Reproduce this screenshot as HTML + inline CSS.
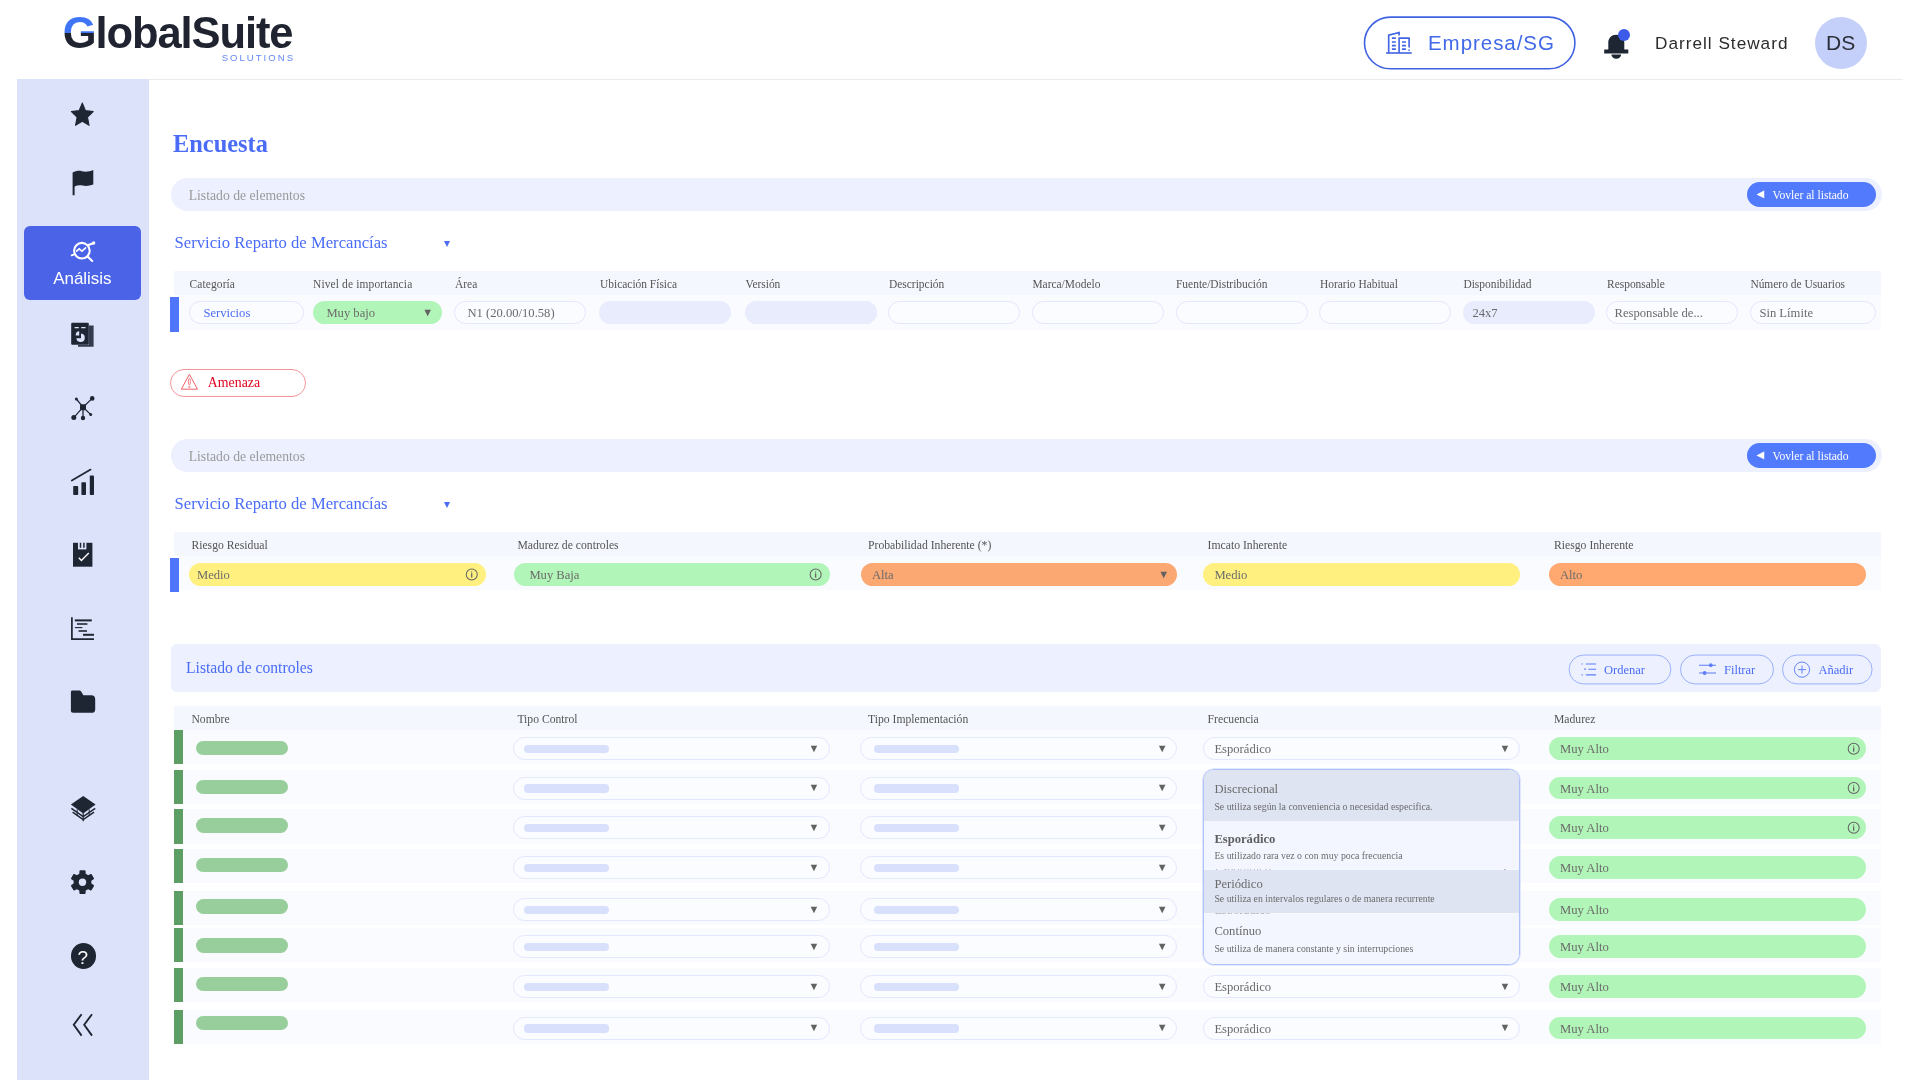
<!DOCTYPE html>
<html lang="es"><head><meta charset="utf-8"><title>Encuesta - GlobalSuite</title>
<style>
html,body{margin:0;padding:0;background:#fff;}
body{width:1920px;height:1080px;position:relative;overflow:hidden;font-family:"Liberation Serif",serif;color:#666;}
div{position:absolute;box-sizing:border-box;}
svg{position:absolute;overflow:visible;}
.t{white-space:nowrap;line-height:1;}
.sans{font-family:"Liberation Sans",sans-serif;}
.lbl{font-size:11.4px;color:#555;}
.pt{font-size:12.5px;color:#6a6a6a;}
.pill{border-radius:12px;}
.inp{border:1px solid #e1e7fd;background:#fbfcff;border-radius:12px;}
.fill{background:#e8ecfd;border-radius:12px;}
.hdr{background:#f5f7fe;}
.row{background:#fafbff;}
.green{background:#b2f5b8;}
.yellow{background:#fff080;}
.arrow{width:0;height:0;border-left:3.6px solid transparent;border-right:3.6px solid transparent;border-top:6px solid #555;}
.gbar{background:#5c9e63;}
.gpill{background:#98ce9b;border-radius:8px;}
.ph{background:#d8e0fc;border-radius:4px;}
</style></head><body>
<div id="app" style="left:0;top:0;width:1920px;height:1080px;will-change:transform;">

<div style="left:17px;top:79px;width:1886px;height:1px;background:#e9ebef;"></div>
<div class="t sans" style="left:62.8px;top:11.1px;font-size:43.5px;font-weight:bold;letter-spacing:-1.1px;color:#1f2430;line-height:44px;" id="logo"><span style="background:linear-gradient(#3f74f7 0,#3f74f7 49.5%,#1f2430 49.5%);-webkit-background-clip:text;background-clip:text;color:transparent;">G</span>lobalSuite</div>
<div class="t sans" id="sol" style="left:221.7px;top:52px;font-size:9.5px;letter-spacing:2.05px;color:#6388f6;line-height:11px;">SOLUTIONS</div>
<svg style="left:1362px;top:14px" width="216" height="58" viewBox="0 0 216 58"><rect x="2.5" y="3.1" width="210.4" height="51.7" rx="25.85" fill="none" stroke="#3f63e3" stroke-width="1.6"/></svg>
<svg style="left:1386px;top:31px" width="27" height="24" viewBox="0 0 27 24" fill="none" stroke="#3f63e3" stroke-width="1.6">
<path d="M0.1 22H25.7"/><path d="M2.7 22V4.2L13.1 1.5V4.6"/><path d="M13.1 22V7.1H23.1V16.6"/><path d="M22.2 19.1H23.9" stroke-width="1.3"/>
<path d="M5.9 7.1H9.8M5.9 11H9.8M5.9 14.6H9.8M5.9 18.2H9.8M16 11H19.9M16 14.6H19.9M16 18.2H19.9" stroke-width="1.7"/>
</svg>
<div class="t sans" id="emp" style="left:1428px;top:30px;font-size:20.5px;letter-spacing:0.95px;color:#4169e8;line-height:25px;">Empresa/SG</div>
<svg style="left:1604px;top:34px" width="25" height="26" viewBox="0 0 25 26">
<path d="M12.3 0.7c-4.8 0-8 3.4-8 7.8v6.9H0.2v4.1h24.1v-4.1h-4V8.5c0-4.4-3.2-7.8-8-7.8z" fill="#1f2633"/>
<path d="M7.4 20.6h9.8a4.9 4.1 0 0 1-9.8 0z" fill="#1f2633"/></svg>
<div style="left:1618px;top:29px;width:12px;height:12px;background:#3b5be8;border-radius:50%;"></div>
<div class="t sans" id="usr" style="left:1655px;top:32px;font-size:17.2px;letter-spacing:1.0px;color:#2b2b2b;line-height:22px;">Darrell Steward</div>
<div style="left:1815px;top:17px;width:52px;height:52px;background:#c5d0fa;border-radius:50%;"></div>
<div class="t sans" id="ds" style="left:1826px;top:30px;font-size:21px;color:#2b2f38;line-height:26px;">DS</div>
<div style="left:17px;top:79px;width:132px;height:1001px;background:#dde2fb;"></div>
<div style="left:24px;top:226px;width:117px;height:74px;background:#4a63e7;border-radius:6px;"></div>
<div class="t sans" style="left:53.2px;top:269px;font-size:17px;line-height:19px;color:#fff;letter-spacing:-0.05px;">Análisis</div>
<svg style="left:70px;top:102px" width="26" height="26" viewBox="0 0 26 26" ><g transform="translate(12.3,13.4) scale(1,1.07)"><polygon points="0.00,-11.50 3.23,-4.45 10.94,-3.55 5.23,1.70 6.76,9.30 0.00,5.50 -6.76,9.30 -5.23,1.70 -10.94,-3.55 -3.23,-4.45" fill="#1f2633" stroke="#1f2633" stroke-width="1" stroke-linejoin="round"/></g></svg>
<svg style="left:70px;top:168px" width="26" height="30" viewBox="0 0 26 30" ><path d="M2.6 4.6 C6 2.8 9 2.4 12 3.2 C16 4.2 19.5 3.4 23.3 2 V16.6 C19.5 18 16 18.4 12.5 17.6 C9.5 17 7 17.4 4.6 18.6 V27.2 H2.6 Z" fill="#1f2633"/></svg>
<svg style="left:69px;top:239px" width="28" height="26" viewBox="0 0 28 26" ><g fill="none" stroke="#fff" stroke-width="2.1" stroke-linecap="round">
<circle cx="12.9" cy="11.7" r="7.8"/><path d="M18.6 17.4L23.2 22"/><path d="M18.6 6.2L24.4 4.2"/><path d="M5.2 15.4L2.6 16.4" stroke-width="1.8"/>
<path d="M7.6 12.2l2.6-2.4 2.8 2.4 3.6-3.4" stroke-width="1.6"/></g><circle cx="24.6" cy="4" r="1.7" fill="#fff"/></svg>
<svg style="left:70px;top:321px" width="26" height="28" viewBox="0 0 26 28" ><rect x="1.2" y="1.8" width="17.6" height="22" rx="1" fill="#1f2633"/>
<path d="M18.8 4.6H23.6V25.8H8V23.8H18.8Z" fill="#343b4c"/>
<path d="M4.6 6.6H8.8M11.2 6.6H15.6" stroke="#dde2fb" stroke-width="1.4"/>
<path d="M9.2 10.2v4.4h-3.4a3.6 3.6 0 0 1 3.4-4.4z" fill="#dde2fb"/>
<path d="M11 12.6a4.2 4.2 0 1 1-4.6 4.6h4.6z" fill="#dde2fb"/></svg>
<svg style="left:69px;top:393px" width="28" height="30" viewBox="0 0 28 30" ><g stroke="#1f2633" stroke-width="1.25" stroke-linecap="round">
<path d="M14 14.2L23.2 5.4M14 14.2L7.4 6M14 14.2L4.8 24.6M14 14.2V25M14 14.2L21.6 21.4"/></g>
<g fill="#1f2633"><rect x="11" y="11.2" width="6" height="6" rx="1.2"/><circle cx="23.2" cy="5.4" r="2.3"/><circle cx="7.4" cy="6" r="1.5"/>
<circle cx="4.8" cy="24.4" r="2.5"/><circle cx="14" cy="25" r="2.2"/><circle cx="21.7" cy="21.4" r="1.5"/></g></svg>
<svg style="left:69px;top:466px" width="28" height="32" viewBox="0 0 28 32" ><g fill="#1f2633"><rect x="4.2" y="20" width="5" height="9" rx="0.8"/><rect x="12.4" y="16.2" width="4.6" height="12.8" rx="0.8"/><rect x="20.8" y="9.4" width="4.2" height="19.6" rx="0.8"/></g>
<path d="M2.8 14.6L21.6 3.6" stroke="#1f2633" stroke-width="1.7" stroke-linecap="round"/></svg>
<svg style="left:71px;top:540px" width="24" height="30" viewBox="0 0 24 30" ><path d="M2 2.8H21.4V26.7H2Z" fill="#1f2633"/><rect x="7" y="2" width="8.4" height="7.4" fill="#dde2fb"/>
<path d="M9.5 2.8V7.8M12.9 2.8V7.8" stroke="#1f2633" stroke-width="1.5"/>
<path d="M7.8 17.8l2.6 2.7 7.4-7.4" fill="none" stroke="#fff" stroke-width="1.4"/></svg>
<svg style="left:69px;top:615px" width="28" height="28" viewBox="0 0 28 28" ><g stroke="#1f2633" fill="none"><path d="M2.9 2.2V24.2H25" stroke-width="1.7"/>
<path d="M5.8 5.4H22.8" stroke-width="2"/><path d="M8 9H18.4" stroke-width="1.6"/><path d="M5.8 12.6H13.4" stroke-width="1.1"/><path d="M9.6 16H18" stroke-width="1.6"/><path d="M14 19.8H25" stroke-width="2"/></g></svg>
<svg style="left:69px;top:688px" width="28" height="28" viewBox="0 0 28 28" ><path d="M3.4 2.6H10.2C11.4 2.6 12 3.2 12.6 4.2L14.4 7.2H22.4C24.8 7.2 26.2 8.8 26.2 11V21.4C26.2 23.6 24.8 24.8 22.8 24.8H4.2C2.6 24.8 1.9 24 1.9 22.6V4.4C1.9 3.2 2.4 2.6 3.4 2.6Z" fill="#1f2633"/></svg>
<svg style="left:69px;top:794px" width="28" height="30" viewBox="0 0 28 30" ><path d="M14.2 2L26.6 10.6L14.2 19.4L1.9 10.6Z" fill="#1f2633"/>
<g fill="none" stroke="#1f2633" stroke-width="1.5"><path d="M2.4 14.4L14.2 22.6L26.2 14.4"/><path d="M3.6 18.2L14.2 25.6L25 18.2"/><path d="M14.2 19V27.2" stroke-width="1.2"/><path d="M8.2 15.4V21.6M20.2 15.4V21.6" stroke-width="1"/></g></svg>
<svg style="left:69px;top:868px" width="28" height="30" viewBox="0 0 28 30" ><polygon points="11.05,6.27 11.26,3.13 15.74,3.13 15.95,6.27 19.14,8.11 21.97,6.72 24.21,10.61 21.59,12.36 21.59,16.04 24.21,17.79 21.97,21.68 19.14,20.29 15.95,22.13 15.74,25.27 11.26,25.27 11.05,22.13 7.86,20.29 5.03,21.68 2.79,17.79 5.41,16.04 5.41,12.36 2.79,10.61 5.03,6.72 7.86,8.11" fill="#1f2633" stroke="#1f2633" stroke-width="1.6" stroke-linejoin="round"/><circle cx="13.5" cy="14.2" r="3.7" fill="#dde2fb"/></svg>
<div style="left:70.6px;top:943px;width:25px;height:25.6px;background:#1f2633;border-radius:50%;"></div>
<div class="t sans" style="left:77.6px;top:947px;font-size:19px;line-height:21px;color:#fff;">?</div>
<svg style="left:69px;top:1011px" width="28" height="28" viewBox="0 0 28 28" ><g fill="none" stroke="#1f2633" stroke-width="1.9"><path d="M12.6 3.2L4.8 13.8L12.6 24.6"/><path d="M23 3.2L15.2 13.8L23 24.6"/></g></svg>
<div class="t" id="enc" style="left:173px;top:130px;font-size:24.4px;line-height:27px;color:#4a6cf7;font-weight:bold;">Encuesta</div>
<div style="left:171px;top:178px;width:1710.5px;height:33px;background:#edf0fe;border-radius:17px;"></div>
<div class="t" style="left:188.7px;top:188px;font-size:13.7px;line-height:15px;color:#9a9a9a;">Listado de elementos</div>
<div style="left:1746.7px;top:181.8px;width:129.5px;height:25.2px;background:#527afc;border-radius:13px;"></div>
<div class="t" style="font-family:'DejaVu Sans',sans-serif;left:1756.50px;top:189.30px;font-size:10px;line-height:10px;color:#fff;">&#9664;</div>
<div class="t" style="left:1772.5px;top:189px;font-size:11.63px;line-height:13px;color:#fff;">Vovler al listado</div>
<div class="t" style="left:174.6px;top:233px;font-size:16.65px;line-height:19px;color:#4a6cf7;">Servicio Reparto de Mercancías</div>
<div class="t" style="font-family:'DejaVu Sans',sans-serif;left:443.94px;top:237.10px;font-size:12px;line-height:12px;color:#4a6cf7;">&#9662;</div>
<div class="hdr" style="left:174.4px;top:271.4px;width:1707px;height:23.6px;"></div>
<div class="row" style="left:179px;top:295px;width:1702.4px;height:34.6px;"></div>
<div style="left:170.4px;top:297px;width:8.8px;height:34.6px;background:#4f75fb;"></div>
<div class="t" style="left:189.6px;top:278px;font-size:11.45px;line-height:12px;color:#555;letter-spacing:0.11px;">Categoría</div>
<div class="t" style="left:313px;top:278px;font-size:11.45px;line-height:12px;color:#555;letter-spacing:0.14px;">Nivel de importancia</div>
<div class="t" style="left:455px;top:278px;font-size:11.45px;line-height:12px;color:#555;">Área</div>
<div class="t" style="left:600px;top:278px;font-size:11.45px;line-height:12px;color:#555;">Ubicación Física</div>
<div class="t" style="left:745.4px;top:278px;font-size:11.45px;line-height:12px;color:#555;">Versión</div>
<div class="t" style="left:889px;top:278px;font-size:11.45px;line-height:12px;color:#555;">Descripción</div>
<div class="t" style="left:1032.4px;top:278px;font-size:11.45px;line-height:12px;color:#555;">Marca/Modelo</div>
<div class="t" style="left:1176px;top:278px;font-size:11.45px;line-height:12px;color:#555;">Fuente/Distribución</div>
<div class="t" style="left:1320px;top:278px;font-size:11.45px;line-height:12px;color:#555;">Horario Habitual</div>
<div class="t" style="left:1463.4px;top:278px;font-size:11.45px;line-height:12px;color:#555;">Disponibilidad</div>
<div class="t" style="left:1607px;top:278px;font-size:11.45px;line-height:12px;color:#555;">Responsable</div>
<div class="t" style="left:1750.4px;top:278px;font-size:11.45px;line-height:12px;color:#555;">Número de Usuarios</div>
<div class="inp" style="left:189px;top:301px;width:115.4px;height:23px;"></div>
<div class="t" style="left:203.4px;top:306px;font-size:12.62px;line-height:14px;color:#4a6cf7;">Servicios</div>
<div class="pill green" style="left:313px;top:301px;width:129px;height:23px;"></div>
<div class="t" style="left:326.4px;top:306px;font-size:12.62px;line-height:14px;color:#6b6b6b;">Muy bajo</div>
<div class="t" style="font-family:'Liberation Serif',serif;left:422.25px;top:307.25px;font-size:11px;line-height:11px;color:#626262;">&#9660;</div>
<div class="inp" style="left:454px;top:301px;width:132px;height:23px;"></div>
<div class="t" style="left:467.4px;top:306px;font-size:12.62px;line-height:14px;color:#6b6b6b;">N1 (20.00/10.58)</div>
<div class="fill" style="left:599.4px;top:301px;width:132px;height:23px;"></div>
<div class="fill" style="left:744.6px;top:301px;width:132.4px;height:23px;"></div>
<div class="inp" style="left:888px;top:301px;width:132.2px;height:23px;"></div>
<div class="inp" style="left:1031.6px;top:301px;width:132.2px;height:23px;"></div>
<div class="inp" style="left:1175.6px;top:301px;width:132.2px;height:23px;"></div>
<div class="inp" style="left:1319px;top:301px;width:132.2px;height:23px;"></div>
<div class="fill" style="left:1462.6px;top:301px;width:132px;height:23px;"></div>
<div class="t" style="left:1472.4px;top:306px;font-size:12.62px;line-height:14px;color:#6b6b6b;">24x7</div>
<div class="inp" style="left:1606px;top:301px;width:132px;height:23px;"></div>
<div class="t" style="left:1614.6px;top:306px;font-size:12.62px;line-height:14px;color:#6b6b6b;">Responsable de...</div>
<div class="inp" style="left:1749.6px;top:301px;width:126.8px;height:23px;"></div>
<div class="t" style="left:1759.4px;top:306px;font-size:12.62px;line-height:14px;color:#6b6b6b;">Sin Límite</div>
<div style="left:170.4px;top:369px;width:135.6px;height:27.6px;border:1px solid #f3959b;border-radius:14px;"></div>
<svg style="left:180px;top:372px" width="20" height="20" viewBox="0 0 20 20" ><g fill="none" stroke="#ee6068" stroke-width="1"><path d="M9.4 2.3L17.5 17.2H1.3Z" stroke-linejoin="round"/><ellipse cx="9.4" cy="9.6" rx="0.95" ry="3.3" stroke-width="0.8"/><circle cx="9.4" cy="14.9" r="0.75" stroke-width="0.75"/></g></svg>
<div class="t" style="left:207.8px;top:375px;font-size:13.85px;line-height:15px;color:#e0021e;">Amenaza</div>
<div style="left:171px;top:439px;width:1710.5px;height:33px;background:#edf0fe;border-radius:17px;"></div>
<div class="t" style="left:188.7px;top:449px;font-size:13.7px;line-height:15px;color:#9a9a9a;">Listado de elementos</div>
<div style="left:1746.7px;top:442.8px;width:129.5px;height:25.2px;background:#527afc;border-radius:13px;"></div>
<div class="t" style="font-family:'DejaVu Sans',sans-serif;left:1756.50px;top:450.30px;font-size:10px;line-height:10px;color:#fff;">&#9664;</div>
<div class="t" style="left:1772.5px;top:450px;font-size:11.63px;line-height:13px;color:#fff;">Vovler al listado</div>
<div class="t" style="left:174.6px;top:494px;font-size:16.65px;line-height:19px;color:#4a6cf7;">Servicio Reparto de Mercancías</div>
<div class="t" style="font-family:'DejaVu Sans',sans-serif;left:443.94px;top:498.10px;font-size:12px;line-height:12px;color:#4a6cf7;">&#9662;</div>
<div class="hdr" style="left:174.4px;top:532px;width:1707px;height:23.6px;"></div>
<div class="row" style="left:179px;top:555.6px;width:1702.4px;height:34px;"></div>
<div style="left:170.4px;top:557.6px;width:8.8px;height:34.4px;background:#4f75fb;"></div>
<div class="t" style="left:191.4px;top:539px;font-size:11.7px;line-height:13px;color:#555;">Riesgo Residual</div>
<div class="t" style="left:517.4px;top:539px;font-size:11.7px;line-height:13px;color:#555;">Madurez de controles</div>
<div class="t" style="left:868px;top:539px;font-size:11.7px;line-height:13px;color:#555;">Probabilidad Inherente (*)</div>
<div class="t" style="left:1207.6px;top:539px;font-size:11.7px;line-height:13px;color:#555;">Imcato Inherente</div>
<div class="t" style="left:1554px;top:539px;font-size:11.7px;line-height:13px;color:#555;">Riesgo Inherente</div>
<div class="pill yellow" style="left:189.4px;top:563px;width:297px;height:22.6px;"></div>
<div class="t" style="left:197px;top:568px;font-size:12.62px;line-height:14px;color:#6b6b6b;">Medio</div>
<svg style="left:463px;top:566px" width="17" height="17" viewBox="0 0 17 17" ><g transform="translate(0.7,0.5)"><circle cx="8.05" cy="8" r="5.5" fill="none" stroke="#646464" stroke-width="1.05"/><path d="M8 7.1V11.1" stroke="#646464" stroke-width="1.3"/><path d="M8 4.6V7.1" stroke="#646464" stroke-width="0.65"/></g></svg>
<div class="pill green" style="left:513.6px;top:563px;width:316.4px;height:22.6px;"></div>
<div class="t" style="left:529.4px;top:568px;font-size:12.62px;line-height:14px;color:#6b6b6b;">Muy Baja</div>
<svg style="left:807px;top:566px" width="17" height="17" viewBox="0 0 17 17" ><g transform="translate(0.6,0.5)"><circle cx="8.05" cy="8" r="5.5" fill="none" stroke="#646464" stroke-width="1.05"/><path d="M8 7.1V11.1" stroke="#646464" stroke-width="1.3"/><path d="M8 4.6V7.1" stroke="#646464" stroke-width="0.65"/></g></svg>
<div class="pill" style="left:860.6px;top:563px;width:316.4px;height:22.6px;background:#fba873;"></div>
<div class="t" style="left:872px;top:568px;font-size:12.62px;line-height:14px;color:#6b6b6b;">Alta</div>
<div class="t" style="font-family:'Liberation Serif',serif;left:1158.26px;top:568.95px;font-size:11px;line-height:11px;color:#626262;">&#9660;</div>
<div class="pill yellow" style="left:1203.4px;top:563px;width:316.2px;height:22.6px;"></div>
<div class="t" style="left:1214.4px;top:568px;font-size:12.62px;line-height:14px;color:#6b6b6b;">Medio</div>
<div class="pill" style="left:1549.4px;top:563px;width:316.2px;height:22.6px;background:#ffa970;"></div>
<div class="t" style="left:1560px;top:568px;font-size:12.62px;line-height:14px;color:#6b6b6b;">Alto</div>
<div style="left:171px;top:644px;width:1710.4px;height:48.4px;background:#edf0fe;border-radius:6px;"></div>
<div class="t" style="left:186px;top:659px;font-size:15.65px;line-height:17px;color:#4a6cf7;">Listado de controles</div>
<svg style="left:1567px;top:653px" width="105.8" height="32.8" viewBox="0 0 105.8 32.8" ><g transform="translate(0.6,0.6)"><rect x="1.5" y="1.5" width="101.8" height="28.8" rx="14.4" fill="none" stroke="#9bb0fb" stroke-width="1"/></g></svg>
<svg style="left:1580px;top:661px" width="18" height="16" viewBox="0 0 18 16" ><g stroke="#5d7ef8" stroke-width="1.1" fill="none"><path d="M5.8 3H16.1M8.4 8.2H16.1M5.8 13.9H16.1"/><path d="M1.5 3H2.8M4.2 8.2H6M1.5 13.9H2.8" stroke-width="1.2"/></g></svg>
<div class="t" style="left:1604px;top:663px;font-size:12.5px;line-height:14px;color:#4a6cf7;">Ordenar</div>
<svg style="left:1679px;top:653px" width="97" height="32.8" viewBox="0 0 97 32.8" ><g transform="translate(0,0.6)"><rect x="1.5" y="1.5" width="93" height="28.8" rx="14.4" fill="none" stroke="#9bb0fb" stroke-width="1"/></g></svg>
<svg style="left:1698px;top:661px" width="20" height="16" viewBox="0 0 20 16" ><g stroke="#5d7ef8" stroke-width="1.1" fill="none"><path d="M1 4.2H18M1 12H18"/></g><circle cx="12.8" cy="4.2" r="1.9" fill="#5d7ef8"/><circle cx="6.6" cy="12" r="1.9" fill="#5d7ef8"/></svg>
<div class="t" style="left:1724px;top:663px;font-size:12.5px;line-height:14px;color:#4a6cf7;">Filtrar</div>
<svg style="left:1781px;top:653px" width="93.6" height="32.8" viewBox="0 0 93.6 32.8" ><g transform="translate(0,0.6)"><rect x="1.5" y="1.5" width="89.6" height="28.8" rx="14.4" fill="none" stroke="#9bb0fb" stroke-width="1"/></g></svg>
<svg style="left:1793px;top:660px" width="19" height="19" viewBox="0 0 19 19" ><g transform="translate(0,0.6)"><g stroke="#5d7ef8" stroke-width="0.95" fill="none"><circle cx="9" cy="9" r="7.6"/><path d="M9 5V13M5 9H13"/></g></g></svg>
<div class="t" style="left:1818.4px;top:663px;font-size:12.5px;line-height:14px;color:#4a6cf7;">Añadir</div>
<div class="hdr" style="left:174.4px;top:706px;width:1707px;height:24px;"></div>
<div class="t" style="left:191.4px;top:713px;font-size:11.66px;line-height:13px;color:#555;">Nombre</div>
<div class="t" style="left:517.4px;top:713px;font-size:11.66px;line-height:13px;color:#555;">Tipo Control</div>
<div class="t" style="left:868px;top:713px;font-size:11.66px;line-height:13px;color:#555;">Tipo Implementación</div>
<div class="t" style="left:1207.6px;top:713px;font-size:11.66px;line-height:13px;color:#555;">Frecuencia</div>
<div class="t" style="left:1554px;top:713px;font-size:11.66px;line-height:13px;color:#555;">Madurez</div>
<div class="row" style="left:174.4px;top:730px;width:1707px;height:34px;"></div>
<div class="gbar" style="left:174.4px;top:730px;width:8.6px;height:34px;"></div>
<div class="gpill" style="left:196px;top:740.6px;width:92px;height:14.4px;"></div>
<div class="inp" style="left:513.4px;top:737.2px;width:316.6px;height:23px;"></div>
<div class="ph" style="left:524.0px;top:745.0px;width:85.4px;height:8.2px;"></div>
<div class="t" style="font-family:'Liberation Serif',serif;left:808.55px;top:742.75px;font-size:11px;line-height:11px;color:#626262;">&#9660;</div>
<div class="inp" style="left:860.4px;top:737.2px;width:316.6px;height:23px;"></div>
<div class="ph" style="left:874.0px;top:745.0px;width:85.4px;height:8.2px;"></div>
<div class="t" style="font-family:'Liberation Serif',serif;left:1156.65px;top:742.75px;font-size:11px;line-height:11px;color:#626262;">&#9660;</div>
<div class="inp" style="left:1203.4px;top:737.2px;width:316.2px;height:23px;"></div>
<div class="t" style="left:1214.4px;top:742px;font-size:12.62px;line-height:14px;color:#6b6b6b;">Esporádico</div>
<div class="t" style="font-family:'Liberation Serif',serif;left:1499.46px;top:742.75px;font-size:11px;line-height:11px;color:#626262;">&#9660;</div>
<div class="pill green" style="left:1549.4px;top:737.2px;width:316.2px;height:22.6px;"></div>
<div class="t" style="left:1560px;top:742px;font-size:12.62px;line-height:14px;color:#6b6b6b;">Muy Alto</div>
<svg style="left:1845px;top:740px" width="17" height="17" viewBox="0 0 17 17" ><g transform="translate(0.65,0.7)"><circle cx="8.05" cy="8" r="5.5" fill="none" stroke="#646464" stroke-width="1.05"/><path d="M8 7.1V11.1" stroke="#646464" stroke-width="1.3"/><path d="M8 4.6V7.1" stroke="#646464" stroke-width="0.65"/></g></svg>
<div class="row" style="left:174.4px;top:769.6px;width:1707px;height:34.39999999999998px;"></div>
<div class="gbar" style="left:174.4px;top:769.6px;width:8.6px;height:34.39999999999998px;"></div>
<div class="gpill" style="left:196px;top:780px;width:92px;height:14.4px;"></div>
<div class="inp" style="left:513.4px;top:776.6px;width:316.6px;height:23px;"></div>
<div class="ph" style="left:524.0px;top:784.4px;width:85.4px;height:8.2px;"></div>
<div class="t" style="font-family:'Liberation Serif',serif;left:808.55px;top:782.15px;font-size:11px;line-height:11px;color:#626262;">&#9660;</div>
<div class="inp" style="left:860.4px;top:776.6px;width:316.6px;height:23px;"></div>
<div class="ph" style="left:874.0px;top:784.4px;width:85.4px;height:8.2px;"></div>
<div class="t" style="font-family:'Liberation Serif',serif;left:1156.65px;top:782.15px;font-size:11px;line-height:11px;color:#626262;">&#9660;</div>
<div class="inp" style="left:1203.4px;top:776.6px;width:316.2px;height:23px;"></div>
<div class="t" style="left:1214.4px;top:782px;font-size:12.62px;line-height:14px;color:#6b6b6b;">Esporádico</div>
<div class="t" style="font-family:'Liberation Serif',serif;left:1499.46px;top:782.15px;font-size:11px;line-height:11px;color:#626262;">&#9660;</div>
<div class="pill green" style="left:1549.4px;top:776.6px;width:316.2px;height:22.6px;"></div>
<div class="t" style="left:1560px;top:782px;font-size:12.62px;line-height:14px;color:#6b6b6b;">Muy Alto</div>
<svg style="left:1845px;top:780px" width="17" height="17" viewBox="0 0 17 17" ><g transform="translate(0.65,0.1)"><circle cx="8.05" cy="8" r="5.5" fill="none" stroke="#646464" stroke-width="1.05"/><path d="M8 7.1V11.1" stroke="#646464" stroke-width="1.3"/><path d="M8 4.6V7.1" stroke="#646464" stroke-width="0.65"/></g></svg>
<div class="row" style="left:174.4px;top:809.4px;width:1707px;height:34.200000000000045px;"></div>
<div class="gbar" style="left:174.4px;top:809.4px;width:8.6px;height:34.200000000000045px;"></div>
<div class="gpill" style="left:196px;top:818.4px;width:92px;height:14.4px;"></div>
<div class="inp" style="left:513.4px;top:816.2px;width:316.6px;height:23px;"></div>
<div class="ph" style="left:524.0px;top:824.0px;width:85.4px;height:8.2px;"></div>
<div class="t" style="font-family:'Liberation Serif',serif;left:808.55px;top:821.75px;font-size:11px;line-height:11px;color:#626262;">&#9660;</div>
<div class="inp" style="left:860.4px;top:816.2px;width:316.6px;height:23px;"></div>
<div class="ph" style="left:874.0px;top:824.0px;width:85.4px;height:8.2px;"></div>
<div class="t" style="font-family:'Liberation Serif',serif;left:1156.65px;top:821.75px;font-size:11px;line-height:11px;color:#626262;">&#9660;</div>
<div class="inp" style="left:1203.4px;top:816.2px;width:316.2px;height:23px;"></div>
<div class="t" style="left:1214.4px;top:821px;font-size:12.62px;line-height:14px;color:#6b6b6b;">Esporádico</div>
<div class="t" style="font-family:'Liberation Serif',serif;left:1499.46px;top:821.75px;font-size:11px;line-height:11px;color:#626262;">&#9660;</div>
<div class="pill green" style="left:1549.4px;top:816.2px;width:316.2px;height:22.6px;"></div>
<div class="t" style="left:1560px;top:821px;font-size:12.62px;line-height:14px;color:#6b6b6b;">Muy Alto</div>
<svg style="left:1845px;top:819px" width="17" height="17" viewBox="0 0 17 17" ><g transform="translate(0.65,0.7)"><circle cx="8.05" cy="8" r="5.5" fill="none" stroke="#646464" stroke-width="1.05"/><path d="M8 7.1V11.1" stroke="#646464" stroke-width="1.3"/><path d="M8 4.6V7.1" stroke="#646464" stroke-width="0.65"/></g></svg>
<div class="row" style="left:174.4px;top:849px;width:1707px;height:34px;"></div>
<div class="gbar" style="left:174.4px;top:849px;width:8.6px;height:34px;"></div>
<div class="gpill" style="left:196px;top:857.6px;width:92px;height:14.4px;"></div>
<div class="inp" style="left:513.4px;top:856px;width:316.6px;height:23px;"></div>
<div class="ph" style="left:524.0px;top:863.8px;width:85.4px;height:8.2px;"></div>
<div class="t" style="font-family:'Liberation Serif',serif;left:808.55px;top:861.55px;font-size:11px;line-height:11px;color:#626262;">&#9660;</div>
<div class="inp" style="left:860.4px;top:856px;width:316.6px;height:23px;"></div>
<div class="ph" style="left:874.0px;top:863.8px;width:85.4px;height:8.2px;"></div>
<div class="t" style="font-family:'Liberation Serif',serif;left:1156.65px;top:861.55px;font-size:11px;line-height:11px;color:#626262;">&#9660;</div>
<div class="inp" style="left:1203.4px;top:856px;width:316.2px;height:23px;"></div>
<div class="t" style="left:1214.4px;top:861px;font-size:12.62px;line-height:14px;color:#6b6b6b;">Esporádico</div>
<div class="t" style="font-family:'Liberation Serif',serif;left:1499.46px;top:861.55px;font-size:11px;line-height:11px;color:#626262;">&#9660;</div>
<div class="pill green" style="left:1549.4px;top:856px;width:316.2px;height:22.6px;"></div>
<div class="t" style="left:1560px;top:861px;font-size:12.62px;line-height:14px;color:#6b6b6b;">Muy Alto</div>
<div class="row" style="left:174.4px;top:891px;width:1707px;height:33.60000000000002px;"></div>
<div class="gbar" style="left:174.4px;top:891px;width:8.6px;height:33.60000000000002px;"></div>
<div class="gpill" style="left:196px;top:899.2px;width:92px;height:14.4px;"></div>
<div class="inp" style="left:513.4px;top:898px;width:316.6px;height:23px;"></div>
<div class="ph" style="left:524.0px;top:905.8px;width:85.4px;height:8.2px;"></div>
<div class="t" style="font-family:'Liberation Serif',serif;left:808.55px;top:903.55px;font-size:11px;line-height:11px;color:#626262;">&#9660;</div>
<div class="inp" style="left:860.4px;top:898px;width:316.6px;height:23px;"></div>
<div class="ph" style="left:874.0px;top:905.8px;width:85.4px;height:8.2px;"></div>
<div class="t" style="font-family:'Liberation Serif',serif;left:1156.65px;top:903.55px;font-size:11px;line-height:11px;color:#626262;">&#9660;</div>
<div class="inp" style="left:1203.4px;top:898px;width:316.2px;height:23px;"></div>
<div class="t" style="left:1214.4px;top:903px;font-size:12.62px;line-height:14px;color:#6b6b6b;">Esporádico</div>
<div class="t" style="font-family:'Liberation Serif',serif;left:1499.46px;top:903.55px;font-size:11px;line-height:11px;color:#626262;">&#9660;</div>
<div class="pill green" style="left:1549.4px;top:898px;width:316.2px;height:22.6px;"></div>
<div class="t" style="left:1560px;top:903px;font-size:12.62px;line-height:14px;color:#6b6b6b;">Muy Alto</div>
<div class="row" style="left:174.4px;top:928.4px;width:1707px;height:34.0px;"></div>
<div class="gbar" style="left:174.4px;top:928.4px;width:8.6px;height:34.0px;"></div>
<div class="gpill" style="left:196px;top:938.4px;width:92px;height:14.4px;"></div>
<div class="inp" style="left:513.4px;top:935.2px;width:316.6px;height:23px;"></div>
<div class="ph" style="left:524.0px;top:943.0px;width:85.4px;height:8.2px;"></div>
<div class="t" style="font-family:'Liberation Serif',serif;left:808.55px;top:940.75px;font-size:11px;line-height:11px;color:#626262;">&#9660;</div>
<div class="inp" style="left:860.4px;top:935.2px;width:316.6px;height:23px;"></div>
<div class="ph" style="left:874.0px;top:943.0px;width:85.4px;height:8.2px;"></div>
<div class="t" style="font-family:'Liberation Serif',serif;left:1156.65px;top:940.75px;font-size:11px;line-height:11px;color:#626262;">&#9660;</div>
<div class="inp" style="left:1203.4px;top:935.2px;width:316.2px;height:23px;"></div>
<div class="t" style="left:1214.4px;top:940px;font-size:12.62px;line-height:14px;color:#6b6b6b;">Esporádico</div>
<div class="t" style="font-family:'Liberation Serif',serif;left:1499.46px;top:940.75px;font-size:11px;line-height:11px;color:#626262;">&#9660;</div>
<div class="pill green" style="left:1549.4px;top:935.2px;width:316.2px;height:22.6px;"></div>
<div class="t" style="left:1560px;top:940px;font-size:12.62px;line-height:14px;color:#6b6b6b;">Muy Alto</div>
<div class="row" style="left:174.4px;top:968px;width:1707px;height:34px;"></div>
<div class="gbar" style="left:174.4px;top:968px;width:8.6px;height:34px;"></div>
<div class="gpill" style="left:196px;top:977px;width:92px;height:14.4px;"></div>
<div class="inp" style="left:513.4px;top:975px;width:316.6px;height:23px;"></div>
<div class="ph" style="left:524.0px;top:982.8px;width:85.4px;height:8.2px;"></div>
<div class="t" style="font-family:'Liberation Serif',serif;left:808.55px;top:980.55px;font-size:11px;line-height:11px;color:#626262;">&#9660;</div>
<div class="inp" style="left:860.4px;top:975px;width:316.6px;height:23px;"></div>
<div class="ph" style="left:874.0px;top:982.8px;width:85.4px;height:8.2px;"></div>
<div class="t" style="font-family:'Liberation Serif',serif;left:1156.65px;top:980.55px;font-size:11px;line-height:11px;color:#626262;">&#9660;</div>
<div class="inp" style="left:1203.4px;top:975px;width:316.2px;height:23px;"></div>
<div class="t" style="left:1214.4px;top:980px;font-size:12.62px;line-height:14px;color:#6b6b6b;">Esporádico</div>
<div class="t" style="font-family:'Liberation Serif',serif;left:1499.46px;top:980.55px;font-size:11px;line-height:11px;color:#626262;">&#9660;</div>
<div class="pill green" style="left:1549.4px;top:975px;width:316.2px;height:22.6px;"></div>
<div class="t" style="left:1560px;top:980px;font-size:12.62px;line-height:14px;color:#6b6b6b;">Muy Alto</div>
<div class="row" style="left:174.4px;top:1009.6px;width:1707px;height:33.999999999999886px;"></div>
<div class="gbar" style="left:174.4px;top:1009.6px;width:8.6px;height:33.999999999999886px;"></div>
<div class="gpill" style="left:196px;top:1016px;width:92px;height:14.4px;"></div>
<div class="inp" style="left:513.4px;top:1016.6px;width:316.6px;height:23px;"></div>
<div class="ph" style="left:524.0px;top:1024.4px;width:85.4px;height:8.2px;"></div>
<div class="t" style="font-family:'Liberation Serif',serif;left:808.55px;top:1022.15px;font-size:11px;line-height:11px;color:#626262;">&#9660;</div>
<div class="inp" style="left:860.4px;top:1016.6px;width:316.6px;height:23px;"></div>
<div class="ph" style="left:874.0px;top:1024.4px;width:85.4px;height:8.2px;"></div>
<div class="t" style="font-family:'Liberation Serif',serif;left:1156.65px;top:1022.15px;font-size:11px;line-height:11px;color:#626262;">&#9660;</div>
<div class="inp" style="left:1203.4px;top:1016.6px;width:316.2px;height:23px;"></div>
<div class="t" style="left:1214.4px;top:1022px;font-size:12.62px;line-height:14px;color:#6b6b6b;">Esporádico</div>
<div class="t" style="font-family:'Liberation Serif',serif;left:1499.46px;top:1022.15px;font-size:11px;line-height:11px;color:#626262;">&#9660;</div>
<div class="pill green" style="left:1549.4px;top:1016.6px;width:316.2px;height:22.6px;"></div>
<div class="t" style="left:1560px;top:1022px;font-size:12.62px;line-height:14px;color:#6b6b6b;">Muy Alto</div>
<div style="left:1203.4px;top:769px;width:316.2px;height:195.6px;border:1px solid #b0c1f9;border-radius:11px;overflow:hidden;box-shadow:0 0 0 0.5px #c5d2fb;"><div style="left:0px;top:0px;width:316px;height:51px;background:#dfe4f3;"></div><div style="left:0px;top:51px;width:316px;height:48px;background:#f3f6ff;"></div><div style="left:0px;top:99px;width:316px;height:1px;background:rgba(243,246,255,0.55);"></div><div style="left:0px;top:100px;width:316px;height:43px;background:#dfe4f3;"></div><div style="left:0px;top:143px;width:316px;height:1px;background:rgba(243,246,255,0.45);"></div><div style="left:0px;top:144px;width:316px;height:52px;background:#f3f6ff;"></div></div>
<div class="t" style="left:1214.4px;top:782px;font-size:12.62px;line-height:14px;color:#6b6b6b;">Discrecional</div>
<div class="t" id="d1" style="left:1214.4px;top:801px;font-size:9.8px;line-height:11px;color:#6b6b6b;">Se utiliza según la conveniencia o necesidad especifica.</div>
<div class="t" style="left:1214.4px;top:832px;font-size:12.62px;line-height:14px;color:#5f5f5f;font-weight:bold;">Esporádico</div>
<div class="t" id="d2" style="left:1214.4px;top:850px;font-size:9.8px;line-height:11px;color:#6b6b6b;">Es utilizado rara vez o con muy poca frecuencia</div>
<div class="t" style="left:1214.4px;top:877px;font-size:12.62px;line-height:14px;color:#6b6b6b;">Periódico</div>
<div class="t" id="d3" style="left:1214.4px;top:893px;font-size:9.8px;line-height:11px;color:#6b6b6b;">Se utiliza en intervalos regulares o de manera recurrente</div>
<div class="t" style="left:1214.4px;top:924px;font-size:12.62px;line-height:14px;color:#6b6b6b;">Contínuo</div>
<div class="t" id="d4" style="left:1214.4px;top:943px;font-size:9.8px;line-height:11px;color:#6b6b6b;">Se utiliza de manera constante y sin interrupciones</div>
</div>
</body></html>
